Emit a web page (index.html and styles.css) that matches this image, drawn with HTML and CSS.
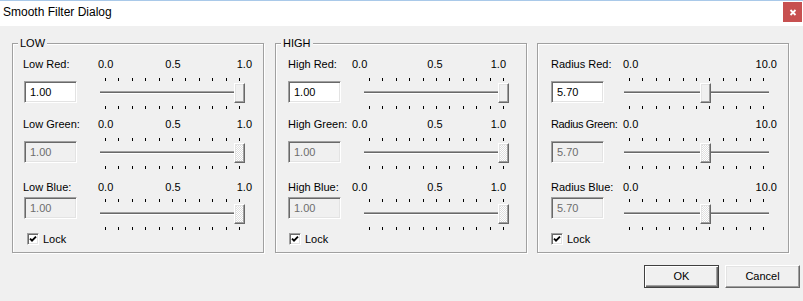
FILE: index.html
```html
<!DOCTYPE html>
<html>

	<head>
		<meta charset="UTF-8">
		<title>Smooth Filter Dialog</title>
		<link rel="stylesheet" href="styles.css">
	</head>

	<body>
		<div class="titlebar">
			<span class="title">Smooth Filter Dialog</span>
			<span class="close">
				<svg width="8" height="7" viewBox="0 0 8 7"><path d="M1.5 1 L6.5 6 M6.5 1 L1.5 6" stroke="#fff" stroke-width="1.8" fill="none"/></svg>
			</span>
		</div>
		<div class="client">
			<div class="groups">
				<!-- LOW -->
				<div class="group group-low">
					<span class="group-title">LOW</span>
					<div class="row">
						<div class="row-head"><span class="label">Low Red:</span><div class="marks"><span>0.0</span><span class="mark-mid">0.5</span><span class="mark-max">1.0</span></div></div>
						<div class="row-body">
							<div class="edit">1.00</div>
							<div class="slider">
								<div class="ticks"><i></i><i></i><i></i><i></i><i></i><i></i><i></i><i></i><i></i><i></i><i></i></div>
								<div class="rail"><div class="track"></div><div class="thumb" style="left:136px"></div></div>
								<div class="ticks"><i></i><i></i><i></i><i></i><i></i><i></i><i></i><i></i><i></i><i></i><i></i></div>
							</div>
						</div>
					</div>
					<div class="row">
						<div class="row-head"><span class="label">Low Green:</span><div class="marks"><span>0.0</span><span class="mark-mid">0.5</span><span class="mark-max">1.0</span></div></div>
						<div class="row-body">
							<div class="edit is-disabled">1.00</div>
							<div class="slider">
								<div class="ticks"><i></i><i></i><i></i><i></i><i></i><i></i><i></i><i></i><i></i><i></i><i></i></div>
								<div class="rail"><div class="track"></div><div class="thumb is-disabled" style="left:136px"></div></div>
								<div class="ticks"><i></i><i></i><i></i><i></i><i></i><i></i><i></i><i></i><i></i><i></i><i></i></div>
							</div>
						</div>
					</div>
					<div class="row row-blue">
						<div class="row-head"><span class="label">Low Blue:</span><div class="marks"><span>0.0</span><span class="mark-mid">0.5</span><span class="mark-max">1.0</span></div></div>
						<div class="row-body">
							<div class="edit is-disabled">1.00</div>
							<div class="slider">
								<div class="ticks"><i></i><i></i><i></i><i></i><i></i><i></i><i></i><i></i><i></i><i></i><i></i></div>
								<div class="rail"><div class="track"></div><div class="thumb is-disabled" style="left:136px"></div></div>
								<div class="ticks"><i></i><i></i><i></i><i></i><i></i><i></i><i></i><i></i><i></i><i></i><i></i></div>
							</div>
						</div>
					</div>
					<div class="lock">
						<span class="check"><svg width="8" height="8" viewBox="0 0 8 8"><path d="M1 3.6 L3 5.6 L7 1.6" stroke="#000" stroke-width="1.9" fill="none"/></svg></span>
						<span class="lock-text">Lock</span>
					</div>
				</div>

				<!-- HIGH -->
				<div class="group group-high">
					<span class="group-title">HIGH</span>
					<div class="row">
						<div class="row-head"><span class="label">High Red:</span><div class="marks"><span>0.0</span><span class="mark-mid">0.5</span><span class="mark-max">1.0</span></div></div>
						<div class="row-body">
							<div class="edit">1.00</div>
							<div class="slider">
								<div class="ticks"><i></i><i></i><i></i><i></i><i></i><i></i><i></i><i></i><i></i><i></i><i></i></div>
								<div class="rail"><div class="track"></div><div class="thumb" style="left:136px"></div></div>
								<div class="ticks"><i></i><i></i><i></i><i></i><i></i><i></i><i></i><i></i><i></i><i></i><i></i></div>
							</div>
						</div>
					</div>
					<div class="row">
						<div class="row-head"><span class="label">High Green:</span><div class="marks"><span>0.0</span><span class="mark-mid">0.5</span><span class="mark-max">1.0</span></div></div>
						<div class="row-body">
							<div class="edit is-disabled">1.00</div>
							<div class="slider">
								<div class="ticks"><i></i><i></i><i></i><i></i><i></i><i></i><i></i><i></i><i></i><i></i><i></i></div>
								<div class="rail"><div class="track"></div><div class="thumb is-disabled" style="left:136px"></div></div>
								<div class="ticks"><i></i><i></i><i></i><i></i><i></i><i></i><i></i><i></i><i></i><i></i><i></i></div>
							</div>
						</div>
					</div>
					<div class="row row-blue">
						<div class="row-head"><span class="label">High Blue:</span><div class="marks"><span>0.0</span><span class="mark-mid">0.5</span><span class="mark-max">1.0</span></div></div>
						<div class="row-body">
							<div class="edit is-disabled">1.00</div>
							<div class="slider">
								<div class="ticks"><i></i><i></i><i></i><i></i><i></i><i></i><i></i><i></i><i></i><i></i><i></i></div>
								<div class="rail"><div class="track"></div><div class="thumb is-disabled" style="left:136px"></div></div>
								<div class="ticks"><i></i><i></i><i></i><i></i><i></i><i></i><i></i><i></i><i></i><i></i><i></i></div>
							</div>
						</div>
					</div>
					<div class="lock">
						<span class="check"><svg width="8" height="8" viewBox="0 0 8 8"><path d="M1 3.6 L3 5.6 L7 1.6" stroke="#000" stroke-width="1.9" fill="none"/></svg></span>
						<span class="lock-text">Lock</span>
					</div>
				</div>

				<!-- RADIUS -->
				<div class="group group-radius">
					<div class="row">
						<div class="row-head"><span class="label">Radius Red:</span><div class="marks"><span>0.0</span><span class="mark-max">10.0</span></div></div>
						<div class="row-body">
							<div class="edit">5.70</div>
							<div class="slider">
								<div class="ticks"><i></i><i></i><i></i><i></i><i></i><i></i><i></i><i></i><i></i><i></i><i></i></div>
								<div class="rail"><div class="track"></div><div class="thumb" style="left:78px"></div></div>
								<div class="ticks"><i></i><i></i><i></i><i></i><i></i><i></i><i></i><i></i><i></i><i></i><i></i></div>
							</div>
						</div>
					</div>
					<div class="row">
						<div class="row-head"><span class="label label-tight">Radius Green:</span><div class="marks"><span>0.0</span><span class="mark-max">10.0</span></div></div>
						<div class="row-body">
							<div class="edit is-disabled">5.70</div>
							<div class="slider">
								<div class="ticks"><i></i><i></i><i></i><i></i><i></i><i></i><i></i><i></i><i></i><i></i><i></i></div>
								<div class="rail"><div class="track"></div><div class="thumb is-disabled" style="left:78px"></div></div>
								<div class="ticks"><i></i><i></i><i></i><i></i><i></i><i></i><i></i><i></i><i></i><i></i><i></i></div>
							</div>
						</div>
					</div>
					<div class="row row-blue">
						<div class="row-head"><span class="label">Radius Blue:</span><div class="marks"><span>0.0</span><span class="mark-max">10.0</span></div></div>
						<div class="row-body">
							<div class="edit is-disabled">5.70</div>
							<div class="slider">
								<div class="ticks"><i></i><i></i><i></i><i></i><i></i><i></i><i></i><i></i><i></i><i></i><i></i></div>
								<div class="rail"><div class="track"></div><div class="thumb is-disabled" style="left:78px"></div></div>
								<div class="ticks"><i></i><i></i><i></i><i></i><i></i><i></i><i></i><i></i><i></i><i></i><i></i></div>
							</div>
						</div>
					</div>
					<div class="lock">
						<span class="check"><svg width="8" height="8" viewBox="0 0 8 8"><path d="M1 3.6 L3 5.6 L7 1.6" stroke="#000" stroke-width="1.9" fill="none"/></svg></span>
						<span class="lock-text">Lock</span>
					</div>
				</div>
			</div>

			<div class="buttons">
				<a href="javascript:;" class="btn btn-default">OK</a>
				<a href="javascript:;" class="btn">Cancel</a>
			</div>
		</div>
	</body>

</html>
```

FILE: styles.css
```css
* {
	margin: 0;
	padding: 0;
	box-sizing: border-box;
}

body {
	width: 803px;
	height: 301px;
	overflow: hidden;
	background-color: #f0f0f0;
	font: 11px/13px "Liberation Sans", Arial, sans-serif;
	color: #000;
}

a {
	text-decoration: none;
	color: #000;
}

/* title bar */
.titlebar {
	display: flex;
	justify-content: space-between;
	align-items: flex-start;
	height: 26px;
	background-color: #fff;
	border-top: 1px solid #a9c9e9;
}

.titlebar .title {
	margin: 4px 0 0 3px;
	font-size: 12px;
	line-height: 15px;
}

.titlebar .close {
	display: flex;
	justify-content: center;
	align-items: center;
	width: 19px;
	height: 20px;
	margin: 1px 1px 0 0;
	background-color: #c75050;
}

/* client area */
.client {
	padding: 17px 0 0 12px;
}

.groups {
	display: flex;
	gap: 11px;
}

.group {
	position: relative;
	width: 252px;
	height: 210px;
	padding: 14px 0 0 10px;
	border: 1px solid #a0a0a0;
	box-shadow: inset 1px 1px #fff, 1px 1px #fff;
}

.group-high {
	padding-left: 12px;
}

.group-radius {
	margin-left: -1px;
	padding-left: 13px;
}

.group-title {
	position: absolute;
	top: -7px;
	left: 5px;
	padding: 0 2px;
	background-color: #f0f0f0;
}

/* one label / edit / slider row */
.row + .row {
	margin-top: 9px;
}

.row-head {
	display: flex;
	height: 13px;
}

.row-head .label {
	width: 75px;
	white-space: nowrap;
}

.group-high .row-head .label {
	width: 64px;
}

.group-radius .row-head .label {
	width: 72px;
}

.row-head .label-tight {
	letter-spacing: -0.35px;
}

.marks {
	display: flex;
	width: 154px;
}

.marks .mark-mid {
	margin-left: 52px;
}

.group-high .marks .mark-mid {
	margin-left: 60px;
}

.marks .mark-max {
	margin-left: auto;
}

.row-body {
	display: flex;
	align-items: flex-start;
}

.edit {
	width: 53px;
	height: 22px;
	margin-top: 10px;
	padding-left: 5px;
	line-height: 20px;
	background-color: #fff;
	border: 1px solid;
	border-color: #a0a0a0 #fff #fff #a0a0a0;
	box-shadow: inset 1px 1px #696969, inset -1px -1px #e3e3e3;
}

.group-low .edit {
	margin-left: 1px;
}

.edit.is-disabled {
	background-color: #f0f0f0;
	color: #6d6d6d;
}

/* trackbar */
.slider {
	width: 148px;
	margin: 7px 0 0 21px;
}

.group-radius .slider {
	margin-left: 18px;
}

.row-blue {
	margin-top: 12px !important;
}

.row-blue .edit {
	margin-top: 3px;
}

.row-blue .slider {
	margin-top: 5px;
}

.slider .ticks {
	display: flex;
	justify-content: space-between;
	width: 135px;
	height: 3px;
	margin-left: 7px;
}

.slider .ticks i {
	width: 1px;
	background-color: #000;
}

.slider .rail {
	position: relative;
	height: 20px;
	margin: 2px 0 3px;
}

.slider .track {
	position: absolute;
	top: 8px;
	left: 2px;
	right: 1px;
	height: 3px;
	background-color: #696969;
	border-top: 1px solid #a0a0a0;
	border-bottom: 1px solid #fff;
}

.slider .thumb {
	position: absolute;
	top: 0;
	width: 11px;
	height: 20px;
	background-color: #f0f0f0;
	border: 1px solid;
	border-color: #fff #696969 #696969 #fff;
	box-shadow: inset -1px -1px #a0a0a0, inset 1px 1px #e3e3e3;
}

.slider .thumb.is-disabled {
	background: repeating-conic-gradient(#fff 0 25%, #dedede 0 50%) 0 0 / 2px 2px;
}

/* lock checkbox */
.lock {
	display: flex;
	align-items: center;
	height: 12px;
	margin-top: 3px;
}

.lock .check {
	display: flex;
	justify-content: center;
	align-items: center;
	width: 12px;
	height: 12px;
	margin-left: 4px;
	background-color: #fff;
	border: 1px solid;
	border-color: #a0a0a0 #fff #fff #a0a0a0;
	box-shadow: inset 1px 1px #696969, inset -1px -1px #e3e3e3;
}

.group-high .lock .check {
	margin-left: 1px;
}

.group-radius .lock .check {
	margin-left: 0;
}

.lock .lock-text {
	margin-left: 4px;
}

/* dialog buttons */
.buttons {
	display: flex;
	justify-content: flex-end;
	gap: 6px;
	margin-top: 12px;
	padding-right: 3px;
}

.btn {
	display: flex;
	justify-content: center;
	align-items: center;
	width: 75px;
	height: 23px;
	background-color: #f0f0f0;
	border: 1px solid;
	border-color: #fff #696969 #696969 #fff;
	box-shadow: inset -1px -1px #a0a0a0, inset 1px 1px #e3e3e3;
}

.btn-default {
	border-color: #404040;
	box-shadow: inset 1px 1px #fff, inset -1px -1px #696969, inset -2px -2px #a0a0a0;
}
```
